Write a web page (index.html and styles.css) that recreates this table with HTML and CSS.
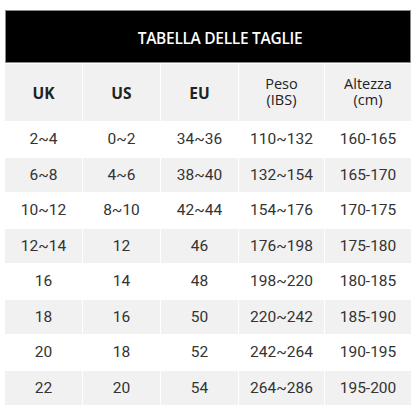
FILE: index.html
```html
<!DOCTYPE html>
<html lang="it">
<head>
<meta charset="utf-8">
<title>Tabella delle taglie</title>
<link rel="stylesheet" href="styles.css">
</head>
<body>
<div class="wrap">
  <div class="title">TABELLA DELLE TAGLIE</div>
  <div class="grid">
    <div class="row head">
      <div class="cell">UK</div>
      <div class="cell">US</div>
      <div class="cell">EU</div>
      <div class="cell sub"><span>Peso</span><span>(IBS)</span></div>
      <div class="cell sub"><span>Altezza</span><span>(cm)</span></div>
    </div>
    <div class="row">
      <div class="cell">2~4</div><div class="cell">0~2</div><div class="cell">34~36</div><div class="cell">110~132</div><div class="cell">160-165</div>
    </div>
    <div class="row alt">
      <div class="cell">6~8</div><div class="cell">4~6</div><div class="cell">38~40</div><div class="cell">132~154</div><div class="cell">165-170</div>
    </div>
    <div class="row">
      <div class="cell">10~12</div><div class="cell">8~10</div><div class="cell">42~44</div><div class="cell">154~176</div><div class="cell">170-175</div>
    </div>
    <div class="row alt">
      <div class="cell">12~14</div><div class="cell">12</div><div class="cell">46</div><div class="cell">176~198</div><div class="cell">175-180</div>
    </div>
    <div class="row">
      <div class="cell">16</div><div class="cell">14</div><div class="cell">48</div><div class="cell">198~220</div><div class="cell">180-185</div>
    </div>
    <div class="row alt">
      <div class="cell">18</div><div class="cell">16</div><div class="cell">50</div><div class="cell">220~242</div><div class="cell">185-190</div>
    </div>
    <div class="row">
      <div class="cell">20</div><div class="cell">18</div><div class="cell">52</div><div class="cell">242~264</div><div class="cell">190-195</div>
    </div>
    <div class="row alt">
      <div class="cell">22</div><div class="cell">20</div><div class="cell">54</div><div class="cell">264~286</div><div class="cell">195-200</div>
    </div>
  </div>
</div>
</body>
</html>
```
FILE: styles.css
```css
html, body {
  margin: 0;
  padding: 0;
  background: #ffffff;
}
.wrap {
  padding: 10px 5px 0 5px;
  width: 406px;
}
.title {
  box-sizing: border-box;
  height: 53px;
  background: #000000;
  border: 1px solid #8a8a8a;
  color: #ffffff;
  font-family: "Open Sans", "Liberation Sans", sans-serif;
  font-size: 15.5px;
  font-weight: 600;
  letter-spacing: -0.3px;
  display: flex;
  align-items: center;
  justify-content: center;
  padding-top: 2px;
  padding-left: 24px;
}
.grid {
  margin-top: 1px;
  display: grid;
  grid-template-columns: 77px 77px 77px 85px 86px;
  grid-template-rows: 57px;
  grid-auto-rows: 34.5px;
  gap: 1px;
}
.row {
  display: contents;
}
.cell {
  display: flex;
  align-items: center;
  justify-content: center;
  text-align: center;
  font-family: Roboto, "Liberation Sans", sans-serif;
  font-size: 15.5px;
  color: #333333;
}
.row.alt .cell {
  background: #f1f1f1;
}
.row.head .cell {
  background: #f1f1f1;
  font-family: "Open Sans", "Liberation Sans", sans-serif;
  font-weight: 700;
  font-size: 15.5px;
  color: #222222;
}
.row.head .cell.sub {
  flex-direction: column;
  font-weight: 400;
  font-size: 14.5px;
  line-height: 16px;
  padding-bottom: 2px;
}
.row.head .cell.sub span {
  display: block;
  height: 16px;
}
```
